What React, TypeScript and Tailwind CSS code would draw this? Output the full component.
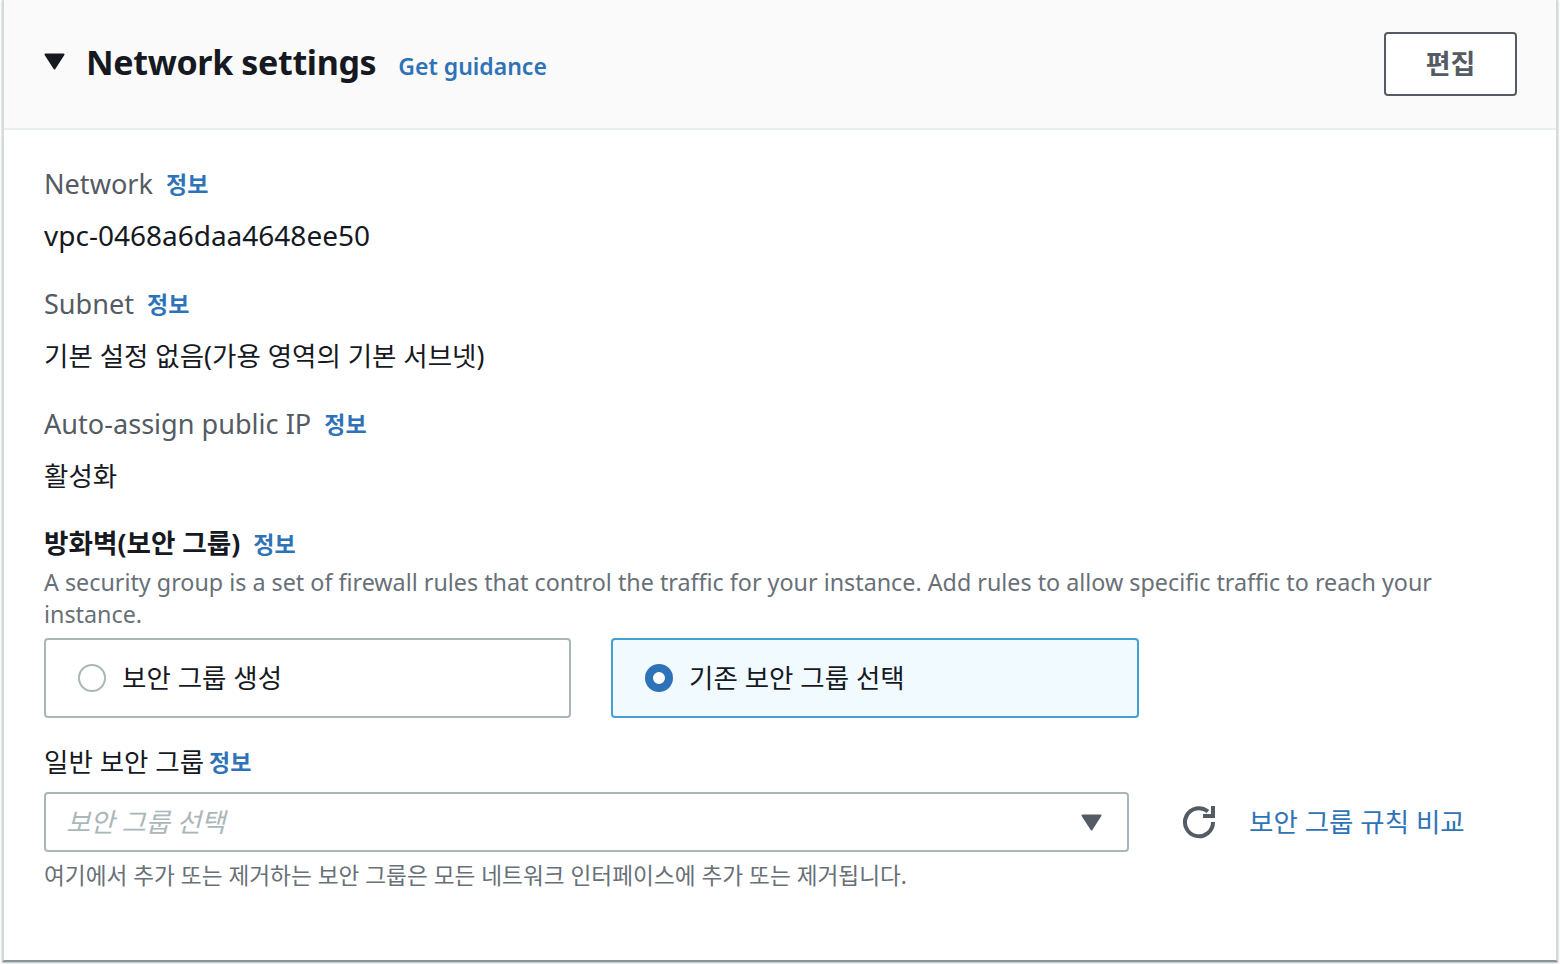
import React from 'react';

const sans = 'font-["Noto_Sans","Noto_Sans_CJK_KR",sans-serif]';

function InfoLink({ className = '' }: { className?: string }) {
  return <a className={`text-[23px] leading-[32px] font-semibold text-[#2e73b8] ${className}`}>정보</a>;
}

function Caret({ color }: { color: string }) {
  return (
    <svg width="21" height="17" viewBox="0 0 21 17" className="shrink-0">
      <path d="M1.5 1.5 H19.5 L10.5 15.5 Z" fill={color} stroke={color} strokeWidth="2" strokeLinejoin="round" />
    </svg>
  );
}

function Field({ label, value, korean }: { label: string; value: string; korean?: boolean }) {
  return (
    <div className="mb-[30px]">
      <div className="flex items-center h-[38px] text-[27.1px] text-[#545b64]">
        <span>{label}</span>
        <InfoLink className="ml-[13px]" />
      </div>
      <div className={`mt-[12px] h-[40px] text-[#16191f] ${korean ? 'text-[26.5px] leading-[42px]' : 'text-[28px] leading-[40px]'}`}>
        {value}
      </div>
    </div>
  );
}

export default function App() {
  return (
    <div className={`w-[1560px] h-[964px] bg-white overflow-hidden ${sans}`}>
      <div className="ml-[2px] w-[1556px] h-[962px] bg-white border-x-2 border-[#d5dbdb] border-b-2 border-b-[#879596] shadow-[0_1px_2px_rgba(0,28,36,0.3)]">
        {/* Header */}
        <div className="h-[130px] bg-[#fafafa] border-b-2 border-[#eaeded] flex items-center pl-[40px] pr-[39px]">
          <div className="mb-[6px]">
            <Caret color="#16191f" />
          </div>
          <h1 className="ml-[21px] text-[34px] leading-[48px] font-bold tracking-[-0.35px] text-[#16191f] mb-[4px]">Network settings</h1>
          <a className="ml-[22px] mt-[4px] text-[23px] leading-[32px] font-semibold text-[#2e73b8]">Get guidance</a>
          <button className="ml-auto w-[133px] h-[64px] rounded-[4px] border-2 border-[#545b64] bg-white text-[27px] font-bold text-[#545b64]">
            편집
          </button>
        </div>

        {/* Body */}
        <div className="pt-[35px] pl-[40px]">
          <Field label="Network" value="vpc-0468a6daa4648ee50" />
          <Field label="Subnet" value="기본 설정 없음(가용 영역의 기본 서브넷)" korean />
          <Field label="Auto-assign public IP" value="활성화" korean />

          <div className="-mt-[1px] flex items-center h-[40px]">
            <span className="text-[26.6px] font-bold text-[#16191f]">방화벽(보안 그룹)</span>
            <InfoLink className="ml-[13px]" />
          </div>
          <p className="w-[1420px] text-[23.3px] leading-[32px] text-[#687078] mt-[2px]">
            A security group is a set of firewall rules that control the traffic for your instance. Add rules to allow specific traffic to reach your instance.
          </p>

          <div className="flex gap-[40px] mt-[8px]">
            <div className="w-[527px] h-[80px] rounded-[4px] border-2 border-[#aab7b8] flex items-center pl-[32px]">
              <span className="w-[28px] h-[28px] rounded-full border-2 border-[#aab7b8] bg-white" />
              <span className="ml-[16px] mt-[2px] text-[26.5px] text-[#16191f]">보안 그룹 생성</span>
            </div>
            <div className="w-[528px] h-[80px] rounded-[4px] border-2 border-[#44a0d0] bg-[#f1faff] flex items-center pl-[32px]">
              <span className="w-[28px] h-[28px] rounded-full border-[8px] border-[#2e73b8] bg-white" />
              <span className="ml-[16px] mt-[2px] text-[26.5px] text-[#16191f]">기존 보안 그룹 선택</span>
            </div>
          </div>

          <div className="mt-[24px] flex items-center h-[40px]">
            <span className="mt-[2px] text-[26.5px] text-[#16191f]">일반 보안 그룹</span>
            <InfoLink className="ml-[5px]" />
          </div>

          <div className="mt-[10px] flex items-center">
            <div className="w-[1085px] h-[60px] rounded-[4px] border-2 border-[#aab7b8] bg-white flex items-center justify-between pl-[20px] pr-[25px]">
              <span className="mt-[2px] text-[26.4px] italic text-[#aab7b8]">보안 그룹 선택</span>
              <Caret color="#545b64" />
            </div>
            <svg width="36" height="36" viewBox="0 0 36 36" className="ml-[53px]" fill="none">
              <path d="M31 18 A14 14 0 1 1 26 7.5" stroke="#545b64" strokeWidth="4" />
              <path d="M33 2 V14 H21 V10 H29 V2 Z" fill="#545b64" />
            </svg>
            <a className="ml-[31px] mt-[2px] text-[26.5px] text-[#2e73b8]">보안 그룹 규칙 비교</a>
          </div>

          <p className="mt-[8px] text-[22.66px] leading-[32px] text-[#687078]">
            여기에서 추가 또는 제거하는 보안 그룹은 모든 네트워크 인터페이스에 추가 또는 제거됩니다.
          </p>
        </div>
      </div>
    </div>
  );
}
